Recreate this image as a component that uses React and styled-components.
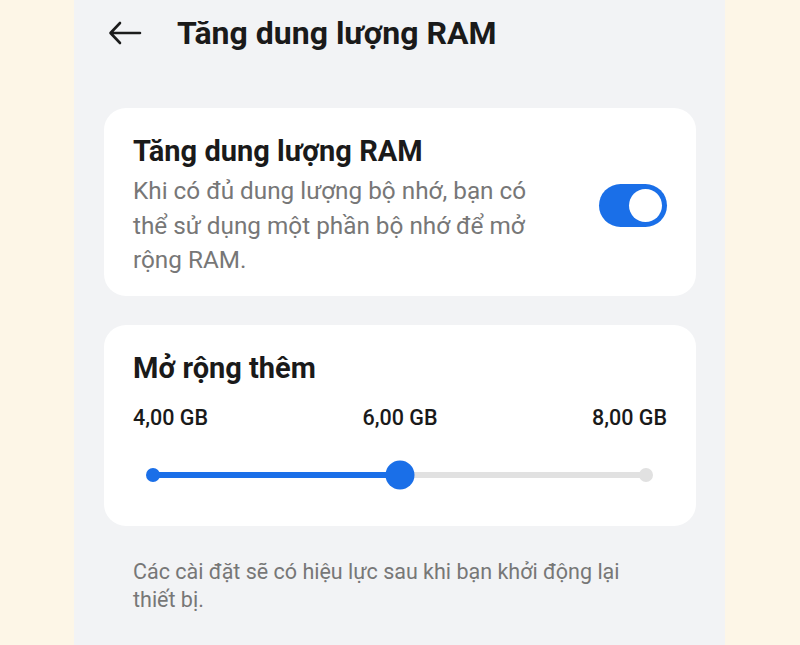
import React from 'react'
import styled, { createGlobalStyle } from 'styled-components'

const GlobalStyle = createGlobalStyle`
  html, body {
    margin: 0;
    padding: 0;
    background: #fdf6e7;
  }
  body {
    font-family: Roboto, "Noto Sans", "Liberation Sans", sans-serif;
  }
`

const Page = styled.div`
  display: flex;
  justify-content: center;
  height: 645px;
  overflow: hidden;
`

const Phone = styled.div`
  width: 651px;
  margin-left: -1px;
  background: #f2f3f5;
  padding: 0 29px 0 30px;
  box-sizing: border-box;
  display: flex;
  flex-direction: column;
`

const Header = styled.div`
  display: flex;
  align-items: center;
  height: 66px;
  gap: 35px;
  padding-left: 4px;
`

const BackButton = styled.button`
  border: 0;
  background: none;
  padding: 0;
  display: flex;
  color: #1c1c1c;
`

const HeaderTitle = styled.h1`
  margin: 0;
  font-size: 32px;
  font-weight: 700;
  color: #1a1a1a;
`

const Card = styled.div`
  background: #fff;
  border-radius: 22px;
  margin-top: ${p => p.$top}px;
  padding: ${p => p.$pad};
`

const ToggleRow = styled.div`
  display: flex;
  align-items: center;
  justify-content: space-between;
`

const CardTitle = styled.div`
  font-size: 29px;
  font-weight: 700;
  color: #1a1a1a;
  line-height: 34px;
`

const Desc = styled.div`
  width: 425px;
  font-size: 24.3px;
  line-height: 34.5px;
  color: #777;
  margin-top: 6px;
`

const Switch = styled.div`
  width: 68px;
  height: 43px;
  border-radius: 22px;
  background: #1a6fe8;
  position: relative;
  flex-shrink: 0;
`

const Knob = styled.div`
  position: absolute;
  right: 5px;
  top: 5px;
  width: 33px;
  height: 33px;
  border-radius: 50%;
  background: #fff;
`

const Labels = styled.div`
  display: flex;
  justify-content: space-between;
  margin-top: 20px;
  font-size: 21.5px;
  line-height: 26px;
  font-weight: 500;
  color: #1a1a1a;
`

const Slider = styled.div`
  position: relative;
  height: 30px;
  margin: 29px 21px 0 20px;
`

const Track = styled.div`
  position: absolute;
  left: 0;
  right: 0;
  top: 12px;
  height: 6px;
  border-radius: 3px;
  background: #e1e1e1;
`

const Fill = styled.div`
  position: absolute;
  left: 0;
  top: 12px;
  height: 6px;
  background: #1a6fe8;
`

const Dot = styled.div`
  position: absolute;
  top: 50%;
  width: ${p => p.$size}px;
  height: ${p => p.$size}px;
  border-radius: 50%;
  background: ${p => p.$color};
  transform: translate(-50%, -50%);
`

const Note = styled.div`
  margin-top: 32px;
  padding-left: 29px;
  font-size: 21.5px;
  line-height: 28px;
  color: #777;
  width: 510px;
`

export default function App() {
  const pct = 50
  return (
    <Page>
      <GlobalStyle />
      <Phone>
        <Header>
          <BackButton>
            <svg width="34" height="24" viewBox="0 0 34 24" fill="none" stroke="currentColor" strokeWidth="2.6" strokeLinecap="round" strokeLinejoin="round">
              <path d="M32 12H3M12 2L2.5 12L12 22" />
            </svg>
          </BackButton>
          <HeaderTitle>Tăng dung lượng RAM</HeaderTitle>
        </Header>
        <Card $top={42} $pad="26px 29px 18px 29px">
          <ToggleRow>
            <div>
              <CardTitle>Tăng dung lượng RAM</CardTitle>
              <Desc>Khi có đủ dung lượng bộ nhớ, bạn có thể sử dụng một phần bộ nhớ để mở rộng RAM.</Desc>
            </div>
            <Switch><Knob /></Switch>
          </ToggleRow>
        </Card>
        <Card $top={29} $pad="26px 29px 36px 29px">
          <CardTitle>Mở rộng thêm</CardTitle>
          <Labels>
            <span>4,00 GB</span>
            <span>6,00 GB</span>
            <span>8,00 GB</span>
          </Labels>
          <Slider>
            <Track />
            <Fill style={{ width: `${pct}%` }} />
            <Dot $size={14} $color="#1a6fe8" style={{ left: '0%' }} />
            <Dot $size={14} $color="#e1e1e1" style={{ left: '100%' }} />
            <Dot $size={29} $color="#1a6fe8" style={{ left: `${pct}%` }} />
          </Slider>
        </Card>
        <Note>Các cài đặt sẽ có hiệu lực sau khi bạn khởi động lại thiết bị.</Note>
      </Phone>
    </Page>
  )
}
